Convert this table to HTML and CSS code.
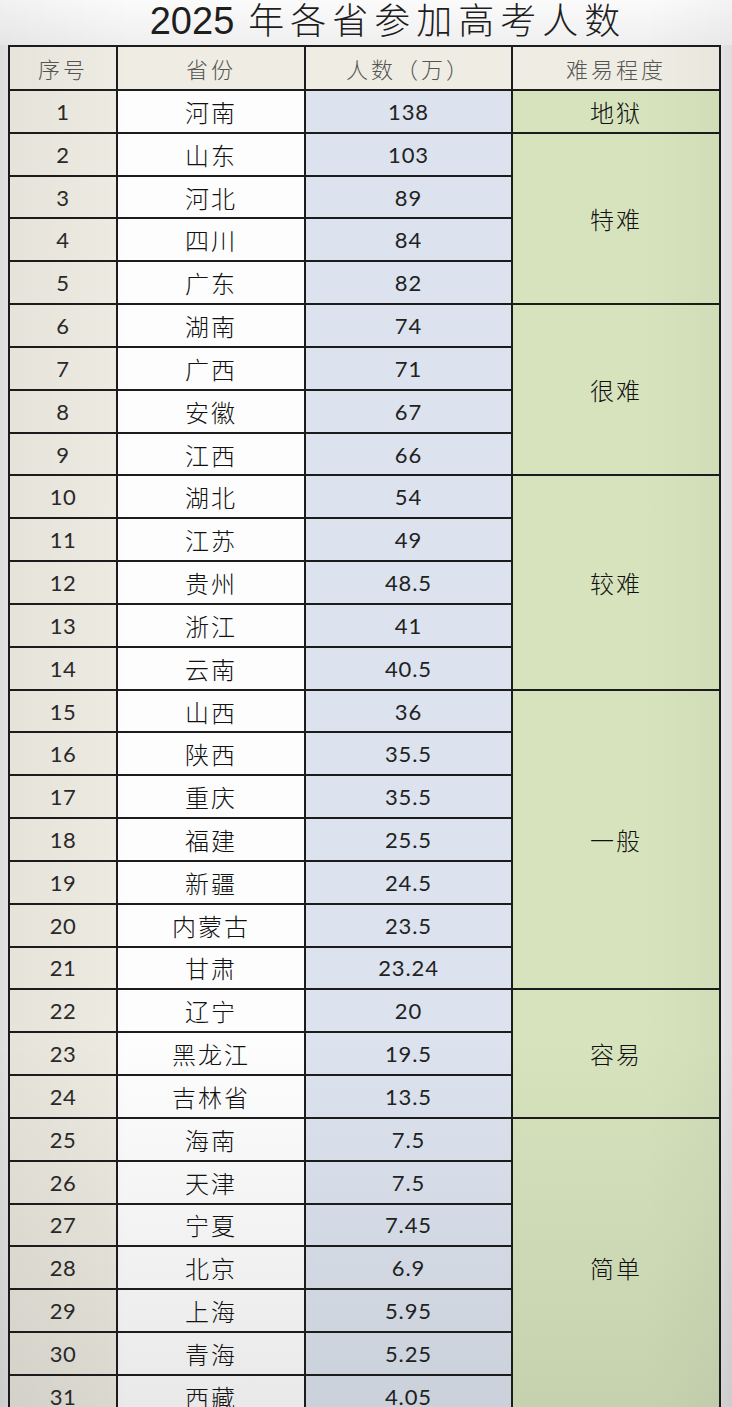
FILE: index.html
```html
<!DOCTYPE html>
<html lang="zh-CN">
<head>
<meta charset="utf-8">
<title>2025 年各省参加高考人数</title>
<link rel="stylesheet" href="styles.css">
</head>
<body>
<div class="page">
  <h1 class="title"><span class="year">2025</span> 年各省参加高考人数</h1>
  <div class="table">
    <div class="cell head c1">序号</div>
    <div class="cell head c2">省份</div>
    <div class="cell head c3">人数（万）</div>
    <div class="cell head c4">难易程度</div>

    <div class="cell c1">1</div><div class="cell c2">河南</div><div class="cell c3">138</div><div class="cell c4 s1">地狱</div>
    <div class="cell c1">2</div><div class="cell c2">山东</div><div class="cell c3">103</div><div class="cell c4 s4">特难</div>
    <div class="cell c1">3</div><div class="cell c2">河北</div><div class="cell c3">89</div>
    <div class="cell c1">4</div><div class="cell c2">四川</div><div class="cell c3">84</div>
    <div class="cell c1">5</div><div class="cell c2">广东</div><div class="cell c3">82</div>
    <div class="cell c1">6</div><div class="cell c2">湖南</div><div class="cell c3">74</div><div class="cell c4 s4">很难</div>
    <div class="cell c1">7</div><div class="cell c2">广西</div><div class="cell c3">71</div>
    <div class="cell c1">8</div><div class="cell c2">安徽</div><div class="cell c3">67</div>
    <div class="cell c1">9</div><div class="cell c2">江西</div><div class="cell c3">66</div>
    <div class="cell c1">10</div><div class="cell c2">湖北</div><div class="cell c3">54</div><div class="cell c4 s5">较难</div>
    <div class="cell c1">11</div><div class="cell c2">江苏</div><div class="cell c3">49</div>
    <div class="cell c1">12</div><div class="cell c2">贵州</div><div class="cell c3">48.5</div>
    <div class="cell c1">13</div><div class="cell c2">浙江</div><div class="cell c3">41</div>
    <div class="cell c1">14</div><div class="cell c2">云南</div><div class="cell c3">40.5</div>
    <div class="cell c1">15</div><div class="cell c2">山西</div><div class="cell c3">36</div><div class="cell c4 s7">一般</div>
    <div class="cell c1">16</div><div class="cell c2">陕西</div><div class="cell c3">35.5</div>
    <div class="cell c1">17</div><div class="cell c2">重庆</div><div class="cell c3">35.5</div>
    <div class="cell c1">18</div><div class="cell c2">福建</div><div class="cell c3">25.5</div>
    <div class="cell c1">19</div><div class="cell c2">新疆</div><div class="cell c3">24.5</div>
    <div class="cell c1">20</div><div class="cell c2">内蒙古</div><div class="cell c3">23.5</div>
    <div class="cell c1">21</div><div class="cell c2">甘肃</div><div class="cell c3">23.24</div>
    <div class="cell c1">22</div><div class="cell c2">辽宁</div><div class="cell c3">20</div><div class="cell c4 s3">容易</div>
    <div class="cell c1">23</div><div class="cell c2">黑龙江</div><div class="cell c3">19.5</div>
    <div class="cell c1">24</div><div class="cell c2">吉林省</div><div class="cell c3">13.5</div>
    <div class="cell c1">25</div><div class="cell c2">海南</div><div class="cell c3">7.5</div><div class="cell c4 s7">简单</div>
    <div class="cell c1">26</div><div class="cell c2">天津</div><div class="cell c3">7.5</div>
    <div class="cell c1">27</div><div class="cell c2">宁夏</div><div class="cell c3">7.45</div>
    <div class="cell c1">28</div><div class="cell c2">北京</div><div class="cell c3">6.9</div>
    <div class="cell c1">29</div><div class="cell c2">上海</div><div class="cell c3">5.95</div>
    <div class="cell c1">30</div><div class="cell c2">青海</div><div class="cell c3">5.25</div>
    <div class="cell c1">31</div><div class="cell c2">西藏</div><div class="cell c3">4.05</div>
  </div>
</div>
</body>
</html>
```
FILE: styles.css
```css
html, body {
  margin: 0;
  padding: 0;
}

body {
  background: #efefef;
}

.page {
  position: relative;
  width: 732px;
  height: 1407px;
  overflow: hidden;
  background: linear-gradient(to right, #e6e6e6 0, #f3f3f3 3%, #f6f6f6 50%, #f0f0f0 97%, #e4e4e4 100%);
}

.page::after {
  content: "";
  position: absolute;
  inset: 0;
  pointer-events: none;
  background:
    linear-gradient(to bottom, rgba(0,0,0,0) 0, rgba(0,0,0,0) 74%, rgba(30,30,30,0.09) 100%),
    linear-gradient(to right, rgba(0,0,0,0.04) 0, rgba(0,0,0,0) 18%, rgba(0,0,0,0) 88%, rgba(0,0,0,0.03) 100%);
}

.title {
  margin: 0;
  height: 45px;
  padding-left: 44px;
  box-sizing: border-box;
  text-align: center;
  font-family: "Noto Sans CJK SC", sans-serif;
  font-weight: 300;
  font-size: 36px;
  line-height: 36px;
  letter-spacing: 6px;
  color: #1e1e1e;
  white-space: nowrap;
  background: linear-gradient(to bottom, #fbfbfb, #efefef);
}

.title .year {
  font-family: "Liberation Sans", sans-serif;
  font-weight: 400;
  font-size: 38px;
  letter-spacing: 0;
}

.table {
  display: grid;
  grid-template-columns: 106px 186px 205px 206px;
  grid-template-rows: 42px repeat(31, 40.83px);
  gap: 2px;
  padding: 2px;
  width: max-content;
  margin-left: 8px;
  background: #1c1c1c;
}

.cell {
  display: flex;
  align-items: center;
  justify-content: center;
  font-family: "Noto Sans CJK SC", sans-serif;
  font-weight: 300;
  font-size: 24px;
  color: #111;
  white-space: nowrap;
  overflow: hidden;
}

.c1 {
  grid-column: 1;
  background: #eeebe2;
  font-family: "Lato", "Open Sans", sans-serif;
  font-weight: 400;
  font-size: 22px;
  color: #2a2a2a;
  letter-spacing: 0.6px;
}

.c2 {
  grid-column: 2;
  background: #fdfdfd;
  letter-spacing: 2px;
}

.c3 {
  grid-column: 3;
  background: #dce3ee;
  font-family: "Lato", "Open Sans", sans-serif;
  font-weight: 400;
  font-size: 22px;
  color: #222;
  letter-spacing: 0.9px;
}

.c4 {
  grid-column: 4;
  background: #d7e3bd;
  letter-spacing: 2px;
}

.head {
  background: #efede3;
  font-family: "Noto Sans CJK SC", sans-serif;
  font-weight: 300;
  font-size: 22px;
  color: #555;
  letter-spacing: 3px;
}

.s1 { grid-row: span 1; }
.s3 { grid-row: span 3; }
.s4 { grid-row: span 4; }
.s5 { grid-row: span 5; }
.s7 { grid-row: span 7; }
```
